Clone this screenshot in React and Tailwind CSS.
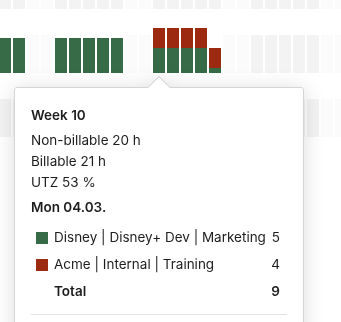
import React from 'react';

const G = 'bg-[#376b47]';
const R = 'bg-[#9b2a10]';

// 25 columns per row, two weekend slots after every five days
const weekend = (k) => k === 2 || k === 3 || k === 9 || k === 10 || k === 16 || k === 17 || k === 23 || k === 24;

const full = [{ c: G, h: 'h-[35px]' }];
const split = [{ c: G, h: 'h-[25px]' }, { c: R, h: 'h-[20px]' }];
const lastDay = [{ c: G, h: 'h-[5px]' }, { c: R, h: 'h-[20px]' }];

const rows = [
  {},
  { 0: full, 1: full, 4: full, 5: full, 6: full, 7: full, 8: full, 11: split, 12: split, 13: split, 14: split, 15: lastDay },
  {},
];

function Column({ k, segments }) {
  if (segments) {
    return (
      <div className="w-3 h-[38px] shrink-0 flex flex-col-reverse">
        {segments.map((s, i) => (
          <div key={i} className={`${s.c} ${s.h} w-full shrink-0`} />
        ))}
      </div>
    );
  }
  return <div className={`w-3 h-[38px] shrink-0 ${weekend(k) ? 'bg-[#fbfbfb]' : 'bg-[#f3f3f3]'}`} />;
}

function LegendRow({ color, label, value, bold }) {
  return (
    <div className="flex items-center h-[27px]">
      <div className="w-[23px] pl-[5px] shrink-0">
        {color && <div className={`w-3 h-3 ${color}`} />}
      </div>
      <div className={`flex-1 whitespace-nowrap ${bold ? 'font-semibold' : ''}`}>{label}</div>
      <div className={`pr-[7px] text-right ${bold ? 'font-semibold' : ''}`}>{value}</div>
    </div>
  );
}

export default function App() {
  return (
    <div className="relative w-[341px] h-[322px] overflow-hidden bg-white" style={{ fontFamily: 'Inter, "Noto Sans", sans-serif' }}>
      <div className="-ml-px -mt-[29px] flex flex-col gap-[26px]">
        {rows.map((row, r) => (
          <div key={r} className="flex gap-[2px]">
            {Array.from({ length: 25 }, (_, k) => (
              <Column key={k} k={k} segments={row[k]} />
            ))}
          </div>
        ))}
      </div>

      <div className="absolute left-[14px] top-[87px] w-[290px] drop-shadow-[0_2px_10px_rgba(0,0,0,0.14)]">
        <div className="relative bg-white border border-[#d5d5d5] rounded-[3px] px-4 pt-[17px] pb-6 text-[13.5px] leading-[21px] text-[#1d1d1f]">
          <div className="font-semibold mb-1">Week 10</div>
          <div>Non-billable 20 h</div>
          <div>Billable 21 h</div>
          <div>UTZ 53 %</div>
          <div className="font-semibold mt-1">Mon 04.03.</div>
          <div className="mt-[6px]">
            <LegendRow color={G} label="Disney | Disney+ Dev | Marketing" value="5" />
            <LegendRow color={R} label="Acme | Internal | Training" value="4" />
            <LegendRow label="Total" value="9" bold />
          </div>
          <div className="mt-[9px] border-t border-[#e3e3e3]" />
          <div className="absolute left-1/2 -translate-x-1/2 -top-[9px] w-4 h-4 rotate-45 bg-white border-l border-t border-[#d5d5d5]" />
        </div>
      </div>
    </div>
  );
}
